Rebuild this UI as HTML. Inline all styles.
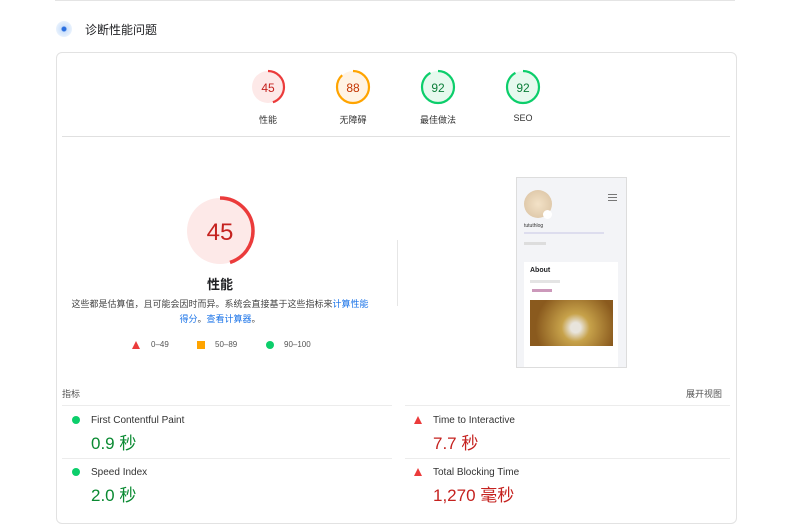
<!DOCTYPE html><html><head><meta charset="utf-8"><style>
body{margin:0;width:800px;height:503px;overflow:hidden;background:#fff;font-family:"Liberation Sans","Noto Sans CJK SC",sans-serif;position:relative;color:#202124}
.a{position:absolute}
.gl{position:absolute;font-size:9px;width:80px;text-align:center;color:#333}
.m{position:absolute;font-size:10px;color:#333}
.v{position:absolute;font-size:17px}
.dot{position:absolute;width:8px;height:8px;border-radius:50%;background:#0cce6b}
.tri{position:absolute;width:0;height:0;border-left:4px solid transparent;border-right:4px solid transparent;border-bottom:8px solid #eb3b3b}
.hl{position:absolute;height:1px;background:#ececec}
</style></head><body>
<div class="hl" style="left:55px;top:0;width:680px;background:#e4e4e4"></div>
<div class="a" style="left:56px;top:21px;width:16px;height:16px;border-radius:50%;background:radial-gradient(#2a6fe0 0 2px,#cfe2fb 3px,#e9f2fd 8px)"></div>
<div class="a" style="left:85px;top:21px;font-size:12px">诊断性能问题</div>
<div class="a" style="left:56px;top:52px;width:679px;height:470px;border:1px solid #e2e2e2;border-radius:6px"></div>
<svg class="a" style="left:0;top:0" width="800" height="503">
<g fill="none" stroke-width="2.2">
<circle cx="268" cy="87" r="16" fill="#fde9e8" stroke="none"/>
<circle cx="268" cy="87" r="16" stroke="#eb3b3b" stroke-dasharray="45.2 100.5" transform="rotate(-90 268 87)"/>
<circle cx="353" cy="87" r="16" fill="#fff3e4" stroke="none"/>
<circle cx="353" cy="87" r="16" stroke="#ffa400" stroke-dasharray="88.5 100.5" transform="rotate(-90 353 87)"/>
<circle cx="438" cy="87" r="16" fill="#e6f9ee" stroke="none"/>
<circle cx="438" cy="87" r="16" stroke="#0cce6b" stroke-dasharray="92.5 100.5" transform="rotate(-90 438 87)"/>
<circle cx="523" cy="87" r="16" fill="#e6f9ee" stroke="none"/>
<circle cx="523" cy="87" r="16" stroke="#0cce6b" stroke-dasharray="92.5 100.5" transform="rotate(-90 523 87)"/>
<circle cx="220" cy="231" r="33" fill="#fde9e8" stroke="none"/>
<circle cx="220" cy="231" r="33" stroke="#eb3b3b" stroke-width="3.5" stroke-dasharray="93.3 207.3" transform="rotate(-90 220 231)"/>
</g>
<g font-family="Liberation Sans" font-size="12" text-anchor="middle">
<text x="268" y="92" fill="#c5221f">45</text><text x="353" y="92" fill="#c33300">88</text>
<text x="438" y="92" fill="#0a7d38">92</text><text x="523" y="92" fill="#0a7d38">92</text>
<text x="220" y="240" font-size="24" fill="#c5221f">45</text></g>
</svg>
<div class="gl" style="left:228px;top:113px">性能</div>
<div class="gl" style="left:313px;top:113px">无障碍</div>
<div class="gl" style="left:398px;top:113px">最佳做法</div>
<div class="gl" style="left:483px;top:113px">SEO</div>
<div class="hl" style="left:62px;top:136px;width:668px;background:#e0e0e0"></div>
<div class="a" style="left:170px;top:274px;width:100px;text-align:center;font-size:13px;font-weight:bold">性能</div>
<div class="a" style="left:70px;top:297px;width:300px;text-align:center;font-size:9px;line-height:15px;color:#444">这些都是估算值，且可能会因时而异。系统会直接基于这些指标来<span style="color:#1a73e8">计算性能得分</span>。<span style="color:#1a73e8">查看计算器</span>。</div>
<div class="tri" style="left:132px;top:341px"></div><div class="m" style="left:151px;top:340px;font-size:8px;color:#555">0–49</div>
<div class="a" style="left:197px;top:341px;width:8px;height:8px;background:#ffa400"></div><div class="m" style="left:215px;top:340px;font-size:8px;color:#555">50–89</div>
<div class="dot" style="left:266px;top:341px"></div><div class="m" style="left:284px;top:340px;font-size:8px;color:#555">90–100</div>
<div class="a" style="left:397px;top:240px;width:1px;height:66px;background:#e6e6e6"></div>
<div class="a" style="left:516px;top:177px;width:109px;height:189px;border:1px solid #ddd;background:#f3f4f7;overflow:hidden">
<div class="a" style="left:7px;top:12px;width:28px;height:28px;border-radius:50%;background:radial-gradient(#f3e2c7,#d8c0a0)"></div>
<div class="a" style="left:26px;top:32px;width:9px;height:9px;border-radius:50%;background:#fff"></div>
<div class="a" style="left:91px;top:16px;width:9px;height:1px;background:#777;box-shadow:0 3px #777,0 6px #777"></div>
<div class="a" style="left:7px;top:45px;font-size:5px;color:#333">tututhlog</div>
<div class="a" style="left:7px;top:54px;width:80px;height:2px;background:#dde"></div>
<div class="a" style="left:7px;top:64px;width:22px;height:3px;background:#ddd"></div>
<div class="a" style="left:7px;top:84px;width:94px;height:105px;background:#fff">
<div class="a" style="left:6px;top:5px;font-size:7px;font-weight:bold">About</div>
<div class="a" style="left:6px;top:18px;width:30px;height:3px;background:#e4e4e4"></div>
<div class="a" style="left:8px;top:27px;width:20px;height:3px;background:#c9b"></div>
<div class="a" style="left:6px;top:38px;width:83px;height:46px;background:radial-gradient(circle at 55% 60%,#e8e4dc 0 5px,#c7a24a 14px,#8a5a1e 40px)"></div>
</div></div>
<div class="m" style="left:62px;top:387px;font-size:9px;color:#555">指标</div>
<div class="m" style="left:686px;top:387px;font-size:9px;color:#555">展开视图</div>
<div class="hl" style="left:62px;top:405px;width:330px"></div><div class="hl" style="left:405px;top:405px;width:325px"></div>
<div class="hl" style="left:62px;top:458px;width:330px"></div><div class="hl" style="left:405px;top:458px;width:325px"></div>
<div class="dot" style="left:72px;top:416px"></div><div class="m" style="left:91px;top:415px">First Contentful Paint</div>
<div class="v" style="left:91px;top:429px;color:#0a8a32">0.9 秒</div>
<div class="dot" style="left:72px;top:468px"></div><div class="m" style="left:91px;top:467px">Speed Index</div>
<div class="v" style="left:91px;top:481px;color:#0a8a32">2.0 秒</div>
<div class="tri" style="left:414px;top:416px"></div><div class="m" style="left:433px;top:415px">Time to Interactive</div>
<div class="v" style="left:433px;top:429px;color:#c5221f">7.7 秒</div>
<div class="tri" style="left:414px;top:468px"></div><div class="m" style="left:433px;top:467px">Total Blocking Time</div>
<div class="v" style="left:433px;top:481px;color:#c5221f">1,270 毫秒</div>
</body></html>
